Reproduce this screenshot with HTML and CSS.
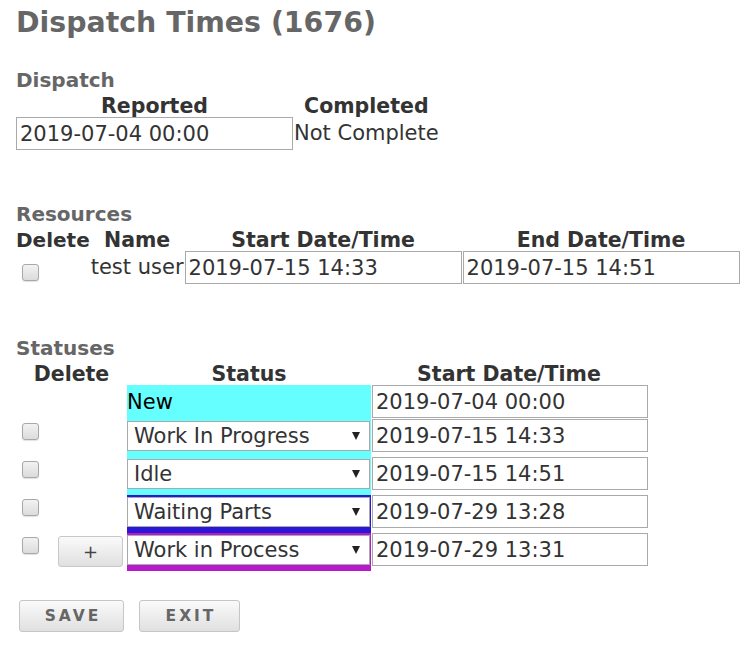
FILE: index.html
```html
<!DOCTYPE html>
<html lang="en">

<head>
    <meta charset="UTF-8" />
    <meta name="viewport" content="width=device-width, initial-scale=1" />
    <title>Dispatch Times</title>
    <link rel="stylesheet" href="styles.css">
</head>

<body>

    <h1 class="page-title">Dispatch Times (1676)</h1>

    <!-- Dispatch -->
    <div class="section first">
        <h2 class="section-title">Dispatch</h2>
        <table class="grid">
            <tr>
                <th>Reported</th>
                <th>Completed</th>
            </tr>
            <tr>
                <td><input class="field" type="text" value="2019-07-04 00:00"></td>
                <td class="plain">Not Complete</td>
            </tr>
        </table>
    </div>

    <!-- Resources -->
    <div class="section">
        <h2 class="section-title">Resources</h2>
        <table class="grid">
            <tr>
                <th class="col-tight">Delete</th>
                <th>Name</th>
                <th>Start Date/Time</th>
                <th>End Date/Time</th>
            </tr>
            <tr>
                <td><input class="check check-res" type="checkbox"></td>
                <td class="plain">test user</td>
                <td><input class="field" type="text" value="2019-07-15 14:33"></td>
                <td><input class="field" type="text" value="2019-07-15 14:51"></td>
            </tr>
        </table>
    </div>

    <!-- Statuses -->
    <div class="section">
        <h2 class="section-title">Statuses</h2>
        <table class="grid statuses">
            <tr>
                <th class="col-del">Delete</th>
                <th class="col-status">Status</th>
                <th class="col-start">Start Date/Time</th>
            </tr>
            <tr>
                <td></td>
                <td class="status status-new cyan">New</td>
                <td class="start"><input class="field narrow" type="text" value="2019-07-04 00:00"></td>
            </tr>
            <tr>
                <td><input class="check" type="checkbox"></td>
                <td class="status cyan">
                    <span class="pick"><select><option>Work In Progress</option></select></span>
                </td>
                <td class="start"><input class="field narrow" type="text" value="2019-07-15 14:33"></td>
            </tr>
            <tr>
                <td><input class="check" type="checkbox"></td>
                <td class="status cyan">
                    <span class="pick"><select><option>Idle</option></select></span>
                </td>
                <td class="start"><input class="field narrow" type="text" value="2019-07-15 14:51"></td>
            </tr>
            <tr>
                <td><input class="check" type="checkbox"></td>
                <td class="status blue">
                    <span class="pick"><select><option>Waiting Parts</option></select></span>
                </td>
                <td class="start"><input class="field narrow" type="text" value="2019-07-29 13:28"></td>
            </tr>
            <tr>
                <td><input class="check" type="checkbox"><button class="btn-add">+</button></td>
                <td class="status magenta">
                    <span class="pick"><select><option>Work in Process</option></select></span>
                </td>
                <td class="start"><input class="field narrow" type="text" value="2019-07-29 13:31"></td>
            </tr>
        </table>
    </div>

    <div class="actions">
        <button class="btn btn-save">Save</button>
        <button class="btn btn-exit">Exit</button>
    </div>

</body>

</html>
```

FILE: styles.css
```css
body {
    font-family: "DejaVu Sans", Verdana, sans-serif;
    color: #333;
    background-color: #fff;
    margin: 0;
    padding: 0 16px;
}

.page-title {
    font-size: 28.4px;
    line-height: 32px;
    font-weight: bold;
    color: #666;
    margin: 7px 0 0;
}

.section {
    margin-top: 53px;
}

.section.first {
    margin-top: 30px;
}

.section-title {
    font-size: 20px;
    line-height: 22px;
    font-weight: bold;
    color: #666;
    margin: 0;
}

.grid {
    border-collapse: collapse;
    margin-top: 4px;
}

.grid th {
    font-size: 20.5px;
    line-height: 22px;
    font-weight: bold;
    color: #333;
    text-align: center;
    white-space: nowrap;
    padding: 0 1px 0 0;
}

.grid th.col-tight {
    width: 74px;
    padding: 0 1px 0 0;
    font-size: 20px;
}

.grid td {
    font-size: 21px;
    color: #333;
    vertical-align: top;
    padding: 0 1px 0 0;
}

.grid td.plain {
    line-height: 33px;
    white-space: nowrap;
}

.field {
    display: block;
    box-sizing: border-box;
    width: 277px;
    height: 33px;
    margin: 0;
    padding: 1px 3px 0;
    border: 1px solid #a9a9a9;
    font-family: "DejaVu Sans", Verdana, sans-serif;
    font-size: 21px;
    color: #333;
    background-color: #fff;
}

.field.narrow {
    width: 276px;
}

.check {
    -webkit-appearance: none;
    appearance: none;
    box-sizing: border-box;
    width: 17px;
    height: 17px;
    margin: 4px 0 0 6px;
    border: 1px solid #a8a8a8;
    border-radius: 3px;
    background: linear-gradient(#f2f2f2, #dcdcdc);
    box-shadow: 0 1px 1px rgba(0, 0, 0, 0.12);
    vertical-align: top;
}

.check.check-res {
    margin-top: 13px;
}

/* statuses table */
.statuses th.col-del {
    width: 111px;
    padding: 0;
}

.statuses th.col-status {
    width: 244px;
    padding: 0;
}

.statuses td.start {
    padding: 0 0 0 1px;
}

.grid td.status {
    padding: 2px 1px 6px 0;
}

.grid td.status-new {
    padding: 0;
    height: 34px;
    line-height: 34px;
    color: #000;
}

.cyan {
    background-color: #66ffff;
}

.blue {
    background-color: #2b17d6;
}

.magenta {
    background-color: #b71bc9;
}

.pick {
    position: relative;
    display: block;
    width: 243px;
}

.pick select {
    -webkit-appearance: none;
    appearance: none;
    display: block;
    box-sizing: border-box;
    width: 243px;
    height: 30px;
    margin: 0;
    padding: 0 24px 0 6px;
    border: 1px solid #a9a9a9;
    border-radius: 0;
    background-color: #fff;
    font-family: "DejaVu Sans", Verdana, sans-serif;
    font-size: 21px;
    color: #333;
}

.pick::after {
    content: "";
    position: absolute;
    right: 10px;
    top: 11px;
    border-left: 4.5px solid transparent;
    border-right: 4.5px solid transparent;
    border-top: 8px solid #222;
    pointer-events: none;
}

.btn-add {
    box-sizing: border-box;
    width: 65px;
    height: 31px;
    margin: 3px 0 0 19px;
    border: 1px solid #c8c8c8;
    border-radius: 3px;
    background: linear-gradient(#fafafa, #e0e0e0);
    font-family: "DejaVu Sans", Verdana, sans-serif;
    font-size: 18px;
    color: #444;
    vertical-align: top;
}

.actions {
    display: flex;
    gap: 15px;
    margin-top: 29px;
    padding-left: 3px;
}

.btn {
    box-sizing: border-box;
    height: 32px;
    padding: 0 0 0 3px;
    border: 1px solid #c6c6c6;
    border-radius: 3px;
    background: linear-gradient(#fafafa, #e0e0e0);
    font-family: "DejaVu Sans", Verdana, sans-serif;
    font-size: 15.5px;
    font-weight: bold;
    letter-spacing: 3px;
    text-transform: uppercase;
    color: #666;
}

.btn-save {
    width: 105px;
}

.btn-exit {
    width: 101px;
}
```
